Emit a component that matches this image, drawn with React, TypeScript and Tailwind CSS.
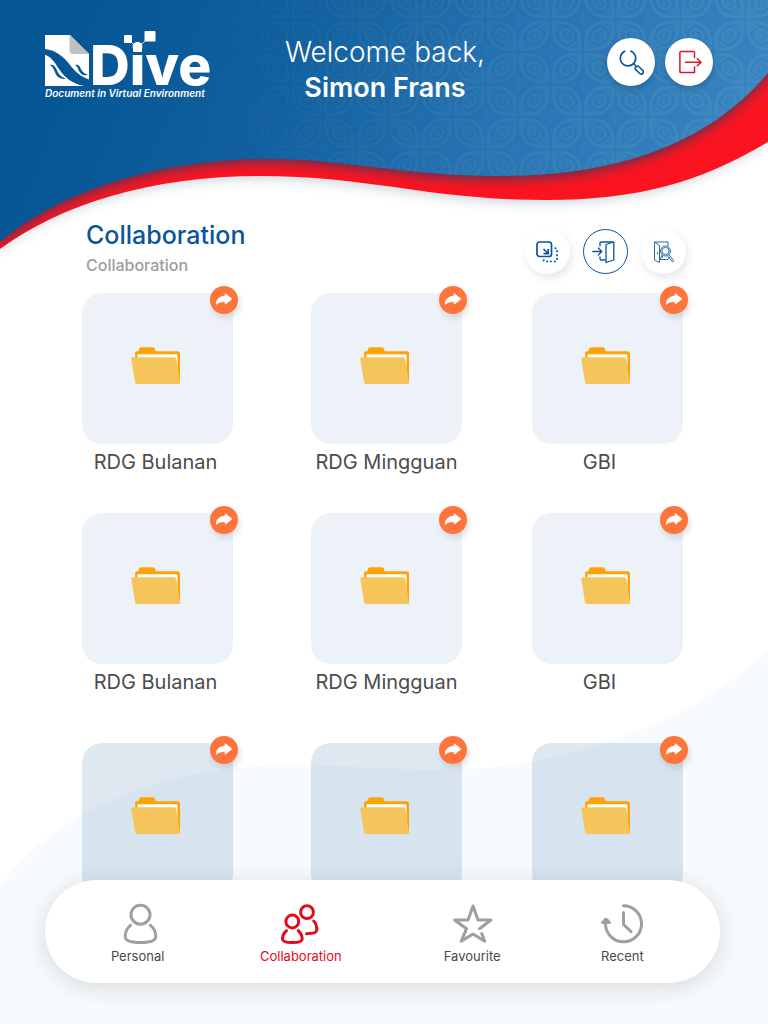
import type { ReactNode } from "react";

const BLUE_WAVE =
  "M0 0H768V73C720 130 640 176 500 176C400 176 350 159 267 159C160 159 60 190 0 242Z";
const RED_WAVE =
  "M0 0H768V142C700 182 640 200 545 200C430 200 370 176 260 176C150 176 60 205 0 249Z";

function Petal({ transform }: { transform: string }) {
  return (
    <g transform={transform}>
      <path d="M-19 0Q0 -23 19 0Q0 23 -19 0Z" strokeWidth="3.2" />
      <ellipse rx="7" ry="5.5" strokeWidth="2.6" />
      <circle r="1.8" strokeWidth="1.6" />
      <path d="M-11 -5v10M-14.500 -3v6M11 -5v10M14.500 -3v6" strokeWidth="1.8" />
    </g>
  );
}

function HeaderBackdrop() {
  return (
    <svg
      className="pointer-events-none absolute inset-x-0 top-0 -z-10 h-[280px] w-full"
      viewBox="0 0 768 280"
      preserveAspectRatio="none"
      aria-hidden="true"
    >
      <defs>
        <linearGradient id="blue" x1="0" y1="0" x2="1" y2="0.12">
          <stop offset="0.1" stopColor="#055695" />
          <stop offset="0.4" stopColor="#115f9e" />
          <stop offset="0.7" stopColor="#2873b1" />
          <stop offset="1" stopColor="#3683c0" />
        </linearGradient>
        <linearGradient id="fade">
          <stop offset="0.2" stopColor="#fff" stopOpacity="0" />
          <stop offset="1" stopColor="#fff" stopOpacity="1" />
        </linearGradient>
        <mask id="patternFade">
          <rect width="768" height="280" fill="url(#fade)" />
        </mask>
        <pattern id="batik" x="-2" y="-13" width="65" height="65" patternUnits="userSpaceOnUse">
          <g fill="none" stroke="#5fa0c0">
            <Petal transform="translate(16.25 16.25) rotate(45)" />
            <Petal transform="translate(48.75 48.75) rotate(45)" />
            <Petal transform="translate(48.75 16.25) rotate(-45)" />
            <Petal transform="translate(16.25 48.75) rotate(-45)" />
          </g>
          <g fill="#2f86cb">
            <path d="M32.5 -9Q34 -1.500 41 0Q34 1.500 32.500 9Q31 1.500 24 0Q31 -1.500 32.500 -9Z" />
            <path d="M32.5 56Q34 63.500 41 65Q34 66.500 32.500 74Q31 66.500 24 65Q31 63.500 32.500 56Z" />
            <path d="M0 23.500Q1.500 31 8.500 32.500Q1.500 34 0 41.500Q-1.500 34 -8.500 32.500Q-1.500 31 0 23.500Z" />
            <path d="M65 23.500Q66.500 31 73.500 32.500Q66.500 34 65 41.500Q63.500 34 56.500 32.500Q63.500 31 65 23.500Z" />
          </g>
        </pattern>
        <clipPath id="redClip">
          <path d={RED_WAVE} />
        </clipPath>
        <filter id="outerShadow" x="-10%" y="-10%" width="120%" height="130%" colorInterpolationFilters="sRGB">
          <feDropShadow dx="-4" dy="3" stdDeviation="6" floodColor="#0b2c50" floodOpacity="0.2" />
        </filter>
        <filter id="innerShadow" x="-10%" y="-10%" width="120%" height="130%" colorInterpolationFilters="sRGB">
          <feDropShadow dx="0" dy="3" stdDeviation="6" floodColor="#1c3f66" floodOpacity="0.75" />
        </filter>
      </defs>
      <path d={RED_WAVE} fill="#fa1420" filter="url(#outerShadow)" />
      <g clipPath="url(#redClip)">
        <path d={BLUE_WAVE} fill="url(#blue)" filter="url(#innerShadow)" />
      </g>
      <g mask="url(#patternFade)">
        <path d={BLUE_WAVE} fill="url(#batik)" opacity="0.28" />
      </g>
    </svg>
  );
}

function FooterBackdrop() {
  return (
    <svg
      className="pointer-events-none absolute inset-x-0 bottom-0 -z-10 h-[384px] w-full"
      viewBox="0 0 768 384"
      preserveAspectRatio="none"
      aria-hidden="true"
    >
      <path
        d="M0 247C50 175 160 125 290 125C350 125 400 130 440 130C560 130 690 85 768 10V384H0Z"
        fill="#f7fbfe"
      />
    </svg>
  );
}

function Logo() {
  return (
    <svg className="h-[70px] w-[170px]" viewBox="0 0 170 70" role="img" aria-label="Dive">
      <path d="M0 5H25L44 24V56H0Z" fill="#fff" />
      <path d="M24.500 5V20.500Q24.500 24 28 24H44Z" fill="#bfc0c2" />
      <path
        d="M0 19C11 20 19 27 25 35C31 43 37 47 44 49.500V56H39C28 54 20 48 14 39C9 31 5 26 0 25Z"
        fill="#055695"
      />
      <path
        d="M5 35C9 34 11 38 12.500 41.500C14 45 17 47.500 21 48.500C17 50 12.500 47.500 10.500 43.500C9 40 8 36.500 5 35ZM30 35C34 34 35 37 36.500 40C38 42.500 40 44 43 44.500C39 46.500 35.500 44 34 41C33 38 32 36 30 35Z"
        fill="#055695"
      />
      <path d="M83 9L92 18L105 7" fill="none" stroke="#fff" strokeWidth="0.8" />
      <g fill="#fff">
        <rect x="79" y="5" width="8" height="8" rx="1" />
        <rect x="99.500" y="1" width="11" height="10.500" rx="1" />
        <rect x="88" y="13.500" width="9" height="8.500" rx="1" />
        <text x="45" y="55" className="font-[Inter,sans-serif] text-[55px] font-extrabold">
          Dive
        </text>
        <text x="0" y="67" className="font-[Inter,sans-serif] text-[10px] font-semibold italic">
          Document in Virtual Environment
        </text>
      </g>
    </svg>
  );
}

function SearchIcon() {
  return (
    <svg className="size-[26px]" viewBox="0 0 24 24" fill="none" stroke="#0b559b" strokeWidth="1.5" strokeLinecap="round" aria-hidden="true">
      <path d="M11.800 1.900A7.100 7.100 0 1 1 6.200 2.100" />
      <path d="M14.300 13.500L16 15.200" />
      <rect x="15.300" y="17.500" width="8.800" height="4" rx="2" transform="rotate(43 19.700 19.500)" />
    </svg>
  );
}

function LogoutIcon() {
  return (
    <svg className="ml-0.5 size-6" viewBox="0 0 24 24" fill="none" stroke="#dc1626" strokeWidth="1.5" strokeLinecap="round" strokeLinejoin="round" aria-hidden="true">
      <path d="M16.500 7.500V2.600Q16.500 1.500 15.400 1.500H3Q1.900 1.500 1.900 2.600V21.400Q1.900 22.500 3 22.500H16.500V17" />
      <path d="M7.500 12.200H22.800M19.300 8.700L23 12.200L19.300 15.700" />
    </svg>
  );
}

function MoveIcon() {
  return (
    <svg className="size-6" viewBox="0 0 24 24" fill="none" stroke="#0b559b" strokeWidth="1.700" aria-hidden="true">
      <rect x="1" y="2" width="14.500" height="14.500" rx="2.500" />
      <path d="M7.500 9L12 13.500M12.200 9V13.700H7.500" />
      <path d="M18.500 8Q21 8 21 10.500V19Q21 21.500 18.500 21.500H10Q7.500 21.500 7.500 19" strokeDasharray="2 1.800" />
    </svg>
  );
}

function EnterIcon() {
  return (
    <svg className="mr-1 size-6" viewBox="0 0 24 24" fill="none" stroke="#0b559b" strokeWidth="1.300" strokeLinejoin="round" strokeLinecap="round" aria-hidden="true">
      <path d="M0.800 11.500H9.800M6.300 8L9.800 11.500L6.300 15" />
      <path d="M8 6V3.300Q8 2 9.300 2H21M8 17V18.700Q8 20 9.300 20H13" />
      <path d="M14 4.500L21.800 2V20L14 22.500Z" />
    </svg>
  );
}

function FindFolderIcon() {
  return (
    <svg className="size-6" viewBox="0 0 24 24" fill="none" stroke="#2b6ba8" strokeWidth="1" strokeLinejoin="round" aria-hidden="true">
      <path d="M2.500 2L7.500 5.500V22.500L2.500 20ZM2.500 2H16V6M5.500 12V14.500" />
      <circle cx="13.500" cy="11" r="5" />
      <circle cx="13.500" cy="11" r="3.600" />
      <path d="M10 15L8 19.500H16L17.500 17M11 15.800L10 18M17 14.800L22 20.800L20.600 21.900L15.800 16" />
    </svg>
  );
}

function FolderIcon() {
  return (
    <svg className="h-[38px] w-[50px]" viewBox="0 0 50 38" aria-hidden="true">
      <path d="M4 6Q4 4.300 6 4.200H7.300L8 2Q8.500 0.300 10.500 0.300H21.500Q23.500 0.300 24 2L24.700 4.200H46.500Q49 4.200 49 6.500V37H6Z" fill="#ffa205" />
      <path d="M6.500 7.300H45.500Q46.500 7.300 46.500 8.500V28L44 12H6.500Z" fill="#fff" />
      <path d="M1.700 10.300H43Q45 10.300 45.400 12.500L49.200 37H6Q4.200 37 4 35L0.300 12Q0.100 10.300 1.700 10.300Z" fill="#f5c55c" />
    </svg>
  );
}

function ShareBadge() {
  return (
    <button
      type="button"
      aria-label="Share"
      className="absolute -top-[7px] -right-[5px] size-7 rounded-full bg-[#ff743b] shadow-[2px_4px_6px_rgba(0,0,0,0.12)]"
    >
      <svg className="size-7" viewBox="0 0 28 28" aria-hidden="true">
        <path
          d="M15.300 7.800L21.800 13L15.300 18V15.700C11 15.300 8.300 16.200 6.300 18.300C6.300 13.500 9.800 10.500 15.300 10.100Z"
          fill="#fff"
          stroke="#fff"
          strokeLinejoin="round"
        />
      </svg>
    </button>
  );
}

type Column = { name: string; labelClass: string };

const columns: Column[] = [
  { name: "RDG Bulanan", labelClass: "pr-1" },
  { name: "RDG Mingguan", labelClass: "" },
  { name: "GBI", labelClass: "pr-4" },
];

function FolderRow({ tone, labelled }: { tone: string; labelled: boolean }) {
  return (
    <ul className="grid grid-cols-[229fr_221fr_151fr]">
      {columns.map((column) => (
        <li key={column.name} className="w-[151px]">
          <div className="relative">
            <button
              type="button"
              aria-label={column.name}
              className={`flex h-[151px] w-full items-center justify-center rounded-[20px] pr-1 pb-1.5 ${tone}`}
            >
              <FolderIcon />
            </button>
            <ShareBadge />
          </div>
          {labelled && (
            <p className={`mt-1 text-center text-[20px] leading-7 whitespace-nowrap text-[#4c4c4c] ${column.labelClass}`}>
              {column.name}
            </p>
          )}
        </li>
      ))}
    </ul>
  );
}

function RoundAction({ label, active, children }: { label: string; active?: boolean; children: ReactNode }) {
  return (
    <button
      type="button"
      aria-label={label}
      className={`flex size-[45px] items-center justify-center rounded-full bg-white ${
        active ? "border border-[#0b559b]" : "shadow-[2px_4px_8px_rgba(0,0,0,0.1)]"
      }`}
    >
      {children}
    </button>
  );
}

function NavItem({ label, active, children }: { label: string; active?: boolean; children: ReactNode }) {
  return (
    <a
      href="#"
      aria-current={active ? "page" : undefined}
      className={`flex flex-col items-center ${active ? "text-[#e20b1b]" : "text-[#9f9f9f]"}`}
    >
      <svg
        className="size-[42px]"
        viewBox="0 0 42 42"
        fill="none"
        stroke="currentColor"
        strokeWidth="3"
        strokeLinecap="round"
        strokeLinejoin="round"
        aria-hidden="true"
      >
        {children}
      </svg>
      <span className={`mt-[3px] text-[13px] leading-4 ${active ? "" : "text-[#4a4a4a]"}`}>{label}</span>
    </a>
  );
}

export default function App() {
  return (
    <div className="relative isolate flex min-h-screen flex-col bg-white pb-[41px] font-[Inter,sans-serif]">
      <HeaderBackdrop />
      <FooterBackdrop />

      <header className="grid grid-cols-[170px_1fr_106px] items-start pt-[30px] pr-[55px] pl-[45px]">
        <Logo />
        <div className="pt-1 pr-[52px] text-center text-white">
          <p className="text-[28px] leading-9 font-light whitespace-nowrap">Welcome back,</p>
          <p className="text-[27px] leading-9 font-semibold whitespace-nowrap">Simon Frans</p>
        </div>
        <div className="flex gap-2.5 pt-2">
          <button type="button" aria-label="Search" className="flex size-12 items-center justify-center rounded-full bg-white shadow-[0_3px_6px_rgba(0,0,0,0.2)]">
            <SearchIcon />
          </button>
          <button type="button" aria-label="Log out" className="flex size-12 items-center justify-center rounded-full bg-white shadow-[0_3px_6px_rgba(0,0,0,0.2)]">
            <LogoutIcon />
          </button>
        </div>
      </header>

      <main className="mt-[111px] pr-[85px] pl-[82px]">
        <div className="flex items-start justify-between pl-1">
          <div>
            <h1 className="text-[25px] leading-9 font-medium text-[#08559b]">Collaboration</h1>
            <p className="text-[16px] leading-6 font-medium text-[#9c9c9c]">Collaboration</p>
          </div>
          <div className="-mr-[3px] flex gap-[13px] pt-3">
            <RoundAction label="Move">
              <MoveIcon />
            </RoundAction>
            <RoundAction label="Open" active>
              <EnterIcon />
            </RoundAction>
            <RoundAction label="Find">
              <FindFolderIcon />
            </RoundAction>
          </div>
        </div>

        <div className="mt-4 flex flex-col gap-[37px]">
          <FolderRow tone="bg-[#edf2f9]" labelled />
          <FolderRow tone="bg-[#edf2f9]" labelled />
        </div>
        <div className="mt-[47px]">
          <FolderRow tone="bg-[rgb(19,91,148)]/14" labelled={false} />
        </div>
      </main>

      <nav
        aria-label="Main"
        className="sticky bottom-[41px] z-10 mr-12 ml-[45px] -mt-[14px] grid h-[103px] grid-cols-[163fr_163fr_179fr_121fr] items-center rounded-full bg-white pt-1 pr-[37px] pl-[11px] shadow-[0_4px_24px_rgba(0,0,0,0.14)]"
      >
        <NavItem label="Personal">
          <circle cx="23.500" cy="11.700" r="9.500" />
          <path d="M13.500 22.300C9 26 8.200 29.500 8.200 33.500C8.200 37.500 14.500 39.500 23.500 39.500C32.500 39.500 38.800 37.500 38.800 33.500C38.800 29.500 38 26 33.500 22.300" />
        </NavItem>
        <NavItem label="Collaboration" active>
          <circle cx="12.300" cy="18.500" r="6.400" />
          <circle cx="27" cy="9.200" r="6.400" />
          <path d="M6.500 27.700C3.500 30.500 2.500 33 2.500 36C2.500 38.500 6.500 39.600 12.300 39.600C18 39.600 22.200 38.500 22.200 36C22.200 33 21.300 30.500 18.200 27.700" />
          <path d="M33.700 18C36.500 20.500 36.800 23.500 36.800 27C36.800 29.800 31 30.700 26.500 30.700" />
        </NavItem>
        <NavItem label="Favourite">
          <path d="M28.500 25.700L40 17H27L22 3L17 17H3.500L15.500 25.700L10.300 38.200L22 31L33.700 38.200L30.800 30.500" />
        </NavItem>
        <NavItem label="Recent">
          <path d="M22.500 2.800A18 18 0 1 1 4.500 20.500" />
          <path d="M1.500 19.500L5 16L8.500 19.500Z" fill="currentColor" />
          <path d="M22.500 9.500V21.500L30 28.700" />
        </NavItem>
      </nav>
    </div>
  );
}
